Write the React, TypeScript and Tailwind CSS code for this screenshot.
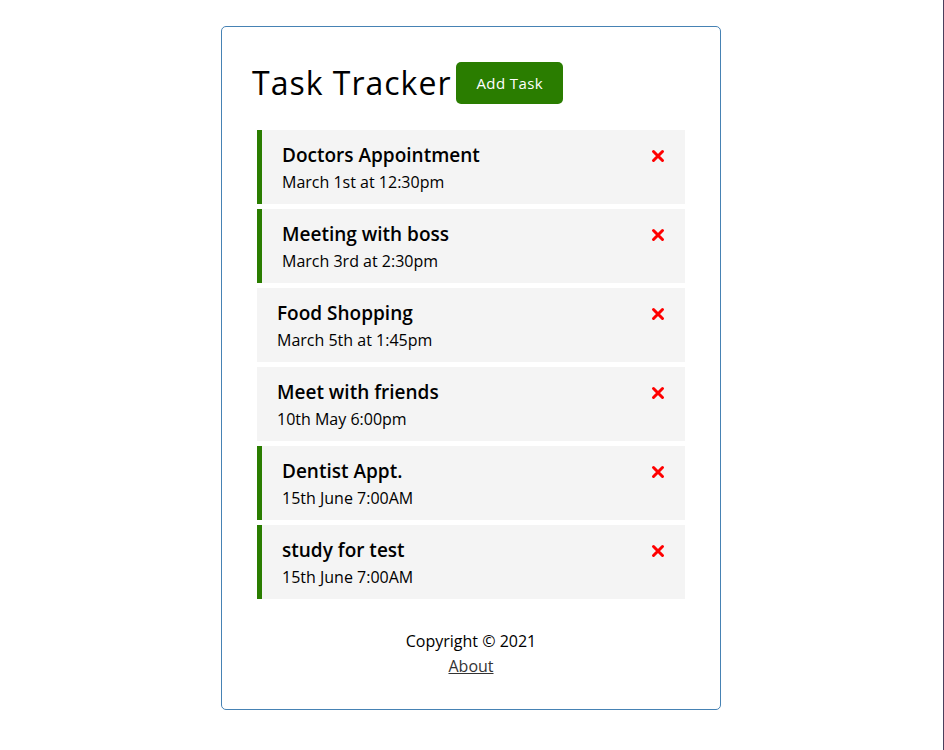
type Task = {
  id: number;
  text: string;
  day: string;
  reminder: boolean;
};

const tasks: Task[] = [
  { id: 1, text: "Doctors Appointment", day: "March 1st at 12:30pm", reminder: true },
  { id: 2, text: "Meeting with boss", day: "March 3rd at 2:30pm", reminder: true },
  { id: 3, text: "Food Shopping", day: "March 5th at 1:45pm", reminder: false },
  { id: 4, text: "Meet with friends", day: "10th May 6:00pm", reminder: false },
  { id: 5, text: "Dentist Appt.", day: "15th June 7:00AM", reminder: true },
  { id: 6, text: "study for test", day: "15th June 7:00AM", reminder: true },
];

function CloseIcon() {
  return (
    <svg width="14" height="14" viewBox="0 0 14 14" className="shrink-0">
      <path d="M2.5 2.5 L11.5 11.5 M11.5 2.5 L2.5 11.5" stroke="#ff0000" strokeWidth="3" strokeLinecap="round" />
    </svg>
  );
}

function TaskItem({ task }: { task: Task }) {
  return (
    <div
      className={`bg-[#f4f4f4] mb-[5px] pt-[12px] pb-[8px] px-5 cursor-pointer ${
        task.reminder ? "border-l-[5px] border-[#2a7d00]" : ""
      }`}
    >
      <h3 className="flex items-center justify-between text-[19px] leading-[27px] font-semibold text-black">
        {task.text}
        <CloseIcon />
      </h3>
      <p className="text-[16px] leading-[27px] text-black">{task.day}</p>
    </div>
  );
}

export default function App() {
  return (
    <div
      className="w-full min-h-[750px] bg-white border-r border-[#4b3f5c] pr-px"
      style={{ fontFamily: "'Open Sans', sans-serif" }}
    >
      <div className="w-[500px] mx-auto pt-[26px]">
        <div className="border border-[#4682b4] rounded-[5px] p-[30px] min-h-[300px]">
          <header className="flex items-center mb-[21px]">
            <h1 className="text-[32px] leading-[48px] tracking-[1px] text-black">Task Tracker</h1>
            <button className="m-[5px] bg-[#2a7d00] text-white text-[15px] leading-[22px] tracking-[0.4px] px-5 py-[10px] rounded-[5px] cursor-pointer">
              Add Task
            </button>
          </header>
          <div className="px-[5px]">
            {tasks.map((t) => (
              <TaskItem key={t.id} task={t} />
            ))}
          </div>
          <footer className="mt-[30px] text-center text-[16px] leading-[25px] text-black">
            <p>Copyright &copy; 2021</p>
            <a href="#" className="underline text-[#333]">
              About
            </a>
          </footer>
        </div>
      </div>
    </div>
  );
}
